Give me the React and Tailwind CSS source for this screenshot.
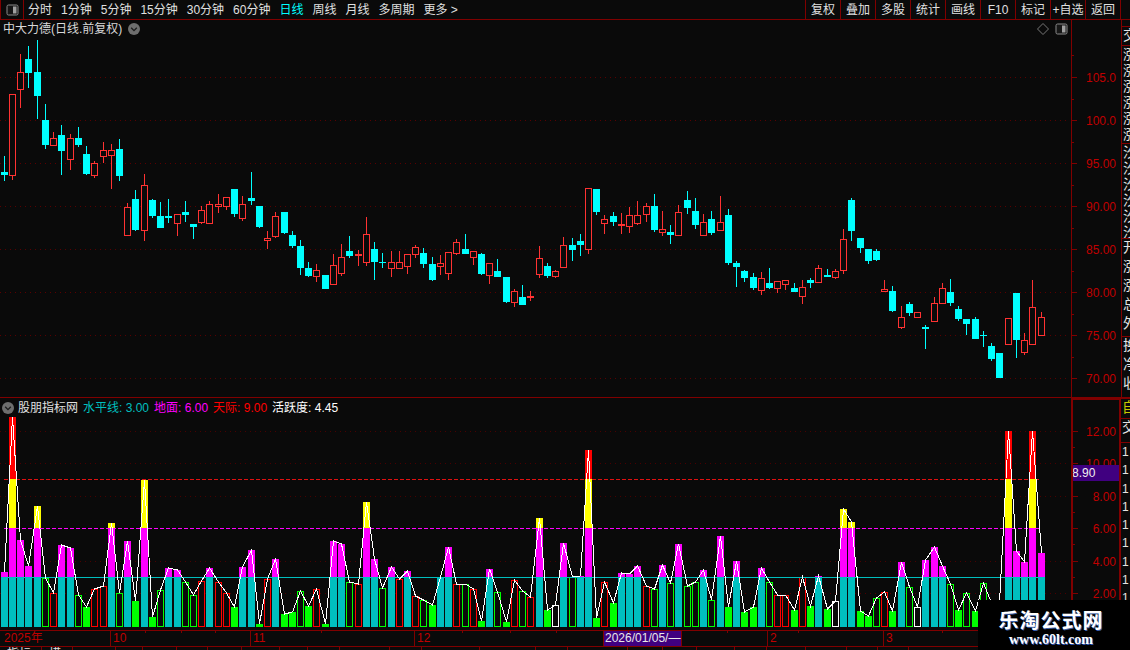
import React from 'react';

// [1 = cyan / 0 = red, body top, body bottom, wick top, wick bottom]
const candles = [
  [1,172,175,156,181],[0,94,176,94,180],[0,72,90,54,108],[1,59,73,46,88],[1,72,96,40,119],[1,120,145,104,149],
  [0,138,146,132,146],[1,135,151,125,175],[0,138,160,134,170],[1,138,145,127,147],[1,154,174,146,175],[0,163,176,161,178],
  [0,150,157,142,163],[0,150,156,144,189],[1,149,176,139,181],[0,207,236,203,236],[1,199,230,190,231],[0,185,231,174,241],
  [1,200,216,199,218],[1,216,228,202,228],[1,216,218,199,223],[0,214,224,214,236],[1,212,215,201,222],[1,224,227,224,239],
  [0,210,223,206,224],[0,204,224,201,224],[0,204,207,194,213],[0,197,207,197,210],[1,189,214,189,217],[0,204,219,196,221],
  [1,198,201,172,205],[1,206,227,206,228],[0,238,241,231,249],[0,216,237,212,238],[1,212,233,212,234],[1,235,246,231,248],
  [1,246,268,240,275],[1,268,276,262,277],[0,270,277,264,282],[1,275,289,275,289],[0,265,285,254,285],[0,257,274,244,276],
  [1,251,256,236,258],[0,254,256,250,266],[0,234,263,217,266],[1,249,262,242,280],[1,262,263,253,268],[0,262,269,251,277],
  [0,262,269,251,269],[0,254,267,254,274],[0,247,255,245,258],[1,253,264,248,268],[1,264,280,257,281],[0,263,267,255,275],
  [0,252,274,252,280],[0,242,254,239,255],[1,249,254,234,254],[0,251,258,251,265],[1,254,274,253,275],[0,263,276,263,284],
  [1,271,277,259,277],[1,277,302,277,303],[0,291,303,289,307],[1,297,305,285,305],[0,296,298,291,301],[0,258,275,246,278],
  [1,266,276,263,278],[0,271,277,270,278],[0,245,268,237,268],[1,245,250,238,261],[1,241,245,234,256],[0,188,250,188,254],
  [1,189,212,189,215],[0,219,224,215,234],[1,216,222,212,226],[0,224,226,213,234],[0,215,227,207,233],[0,215,224,201,225],
  [0,206,215,203,222],[1,206,230,194,232],[0,229,233,211,236],[1,232,235,225,244],[0,212,236,205,236],[1,200,208,191,214],
  [1,211,225,198,229],[0,222,236,214,236],[1,219,233,211,235],[0,222,231,196,231],[1,215,263,209,265],[1,263,267,261,287],
  [1,271,278,270,282],[1,277,288,273,290],[0,278,291,272,295],[1,283,288,268,289],[0,281,289,281,293],[0,280,285,280,290],
  [1,288,292,283,292],[0,287,297,280,304],[1,280,283,278,288],[0,268,283,265,283],[1,275,277,269,277],[0,271,278,269,279],
  [0,239,271,229,274],[1,200,231,198,241],[1,238,248,238,253],[1,249,261,249,264],[1,251,260,249,261],[0,289,292,280,292],
  [1,291,311,286,312],[0,317,328,306,329],[1,304,313,302,316],[0,312,318,312,318],[1,327,329,325,349],[0,303,322,297,322],
  [0,288,304,283,304],[1,292,303,279,306],[1,309,319,306,321],[1,319,324,319,335],[1,319,339,317,339],[1,335,336,331,347],
  [1,346,359,343,361],[1,353,378,353,378],[0,318,345,318,345],[1,293,340,293,358],[0,340,353,333,355],[0,307,345,280,345],
  [0,317,336,312,336],
];

// [kind, top in 3x crop units]: s = stacked, g = green fill, o = green outline, r = red outline, w = white outline
const bars = [
  ['s',546],['s',81],['s',450],['s',528],['s',348],['o',565],['r',610],['s',465],['s',474],['o',616],['g',651],['r',598],
  ['r',589],['s',399],['o',610],['s',453],['g',633],['s',270],['g',681],['o',601],['s',534],['s',540],['o',577],['o',616],
  ['r',574],['s',534],['r',577],['r',610],['g',651],['s',531],['s',480],['g',702],['r',568],['s',507],['g',672],['g',666],
  ['o',604],['g',648],['r',598],['g',702],['s',453],['s',462],['o',577],['r',583],['s',336],['s',507],['o',595],['s',531],
  ['r',568],['s',543],['r',619],['o',631],['g',645],['s',562],['s',471],['r',583],['o',583],['r',598],['g',693],['s',537],
  ['o',607],['g',696],['r',571],['o',604],['r',622],['s',384],['g',660],['w',646],['s',459],['o',562],['s',558],['s',180],
  ['g',684],['r',577],['g',639],['s',549],['s',553],['s',528],['r',589],['o',598],['s',525],['o',580],['s',462],['o',589],
  ['o',577],['s',540],['o',631],['s',438],['g',651],['s',513],['g',666],['g',651],['s',534],['o',577],['r',616],['r',616],
  ['g',660],['r',562],['g',648],['s',558],['g',657],['w',634],['s',357],['s',396],['g',663],['g',678],['o',625],['r',607],
  ['g',663],['s',516],['o',592],['w',652],['s',510],['s',471],['s',528],['o',583],['g',660],['o',610],['g',663],['o',580],
  ['o',640],['o',640],['s',123],['s',483],['s',516],['s',123],['s',489],
];

const barLeft = (i) => Math.round(4.3 + 8.228 * i - 3.51);
const barTop = (v) => Math.round(390 + v / 3);

const mainGrid = [77, 120, 163, 206, 249, 292, 335, 378];
const mainLabels = ['105.0', '100.0', '95.00', '90.00', '85.00', '80.00', '75.00', '70.00'];
const subGrid = [431, 463, 496, 561, 593];
const subLabels = [[431, '12.00'], [463, '10.00'], [496, '8.00'], [528, '6.00'], [561, '4.00'], [593, '2.00']];

const tabs = ['分时', '1分钟', '5分钟', '15分钟', '30分钟', '60分钟', '日线', '周线', '月线', '多周期', '更多 >'];
const tools = ['复权', '叠加', '多股', '统计', '画线', 'F10', '标记', '+自选', '返回'];

const PanelIcon = ({ className }) => (
  <svg width="13" height="12" viewBox="0 0 13 12" className={className}>
    <rect x="1" y="1" width="11" height="10" rx="1.5" fill="#161616" stroke="#8a8a8a" />
    <rect x="7" y="2.5" width="3.5" height="7" fill="#a0a0a0" />
  </svg>
);

const RoundArrow = () => (
  <svg width="12" height="12" viewBox="0 0 12 12">
    <circle cx="6" cy="6" r="6" fill="#6e6e6e" />
    <path d="M3.2 4.8 L6 7.6 L8.8 4.8" fill="none" stroke="#1c1c1c" strokeWidth="1.3" />
  </svg>
);

const CandleChart = () => (
  <svg width="1071" height="359" viewBox="0 38 1071 359" shapeRendering="crispEdges" className="block">
    {mainGrid.map((y) => (
      <line key={y} x1="0" x2="1068" y1={y + 0.5} y2={y + 0.5} stroke="#5a0000" strokeDasharray="1 4" />
    ))}
    {candles.map(([cyan, top, bottom, wickTop, wickBottom], i) => {
      const x = barLeft(i);
      const color = cyan ? '#00ffff' : '#ff3232';
      return (
        <g key={i}>
          <rect x={x + 3} y={wickTop} width="1" height={wickBottom - wickTop} fill={color} />
          {cyan ? (
            <rect x={x} y={top} width="7" height={bottom - top} fill={color} />
          ) : (
            <rect x={x + 0.5} y={top + 0.5} width="6" height={bottom - top - 1} fill="#0a0a0a" stroke={color} />
          )}
        </g>
      );
    })}
  </svg>
);

const stack = [
  [577, 627, '#00bfbf'],
  [528, 577, '#ff00ff'],
  [479, 528, '#ffff00'],
  [0, 479, '#ff0000'],
];

const outlineColor = { o: '#00ff00', r: '#ff0000', w: '#ffffff' };

const ActivityChart = () => {
  const points = bars.map(([, v], i) => `${barLeft(i) + 3.5},${barTop(v)}`).join(' ');
  return (
    <svg width="1071" height="213" viewBox="0 417 1071 213" shapeRendering="crispEdges" className="block">
      {subGrid.map((y) => (
        <line key={y} x1="0" x2="1068" y1={y + 0.5} y2={y + 0.5} stroke="#4a0000" strokeDasharray="1 4" />
      ))}
      <line x1="4" x2="1039" y1="479.5" y2="479.5" stroke="#e01010" strokeDasharray="4 2" />
      {bars.map(([kind, v], i) => {
        const x = barLeft(i);
        const top = barTop(v);
        if (kind === 's') {
          return stack.map(([from, to, fill]) => {
            const y = Math.max(from, top);
            return y < to ? <rect key={`${i}-${from}`} x={x} y={y} width="7" height={to - y} fill={fill} /> : null;
          });
        }
        if (kind === 'g') return <rect key={i} x={x} y={top} width="7" height={627 - top} fill="#00ff00" />;
        return (
          <rect key={i} x={x + 0.5} y={top + 0.5} width="6" height={626 - top} fill="#0a0a0a" stroke={outlineColor[kind]} />
        );
      })}
      <line x1="4" x2="1039" y1="528.5" y2="528.5" stroke="#ff00ff" strokeDasharray="4 2" />
      <line x1="1" x2="1045" y1="577.5" y2="577.5" stroke="#00bfbf" />
      <polyline points={points} fill="none" stroke="#ffffff" />
    </svg>
  );
};

const MainAxis = () => (
  <svg width="49" height="377" viewBox="1072 20 49 377" shapeRendering="crispEdges" className="block">
    {mainGrid.map((y, i) => (
      <g key={y}>
        <rect x="1072" y={y} width="5" height="1" fill="#800000" />
        <rect x="1072" y={y + 22} width="2" height="1" fill="#800000" />
        <text x="1116" y={y + 5} textAnchor="end" fontSize="12" fill="#c00000">{mainLabels[i]}</text>
      </g>
    ))}
    <rect x="1072" y="55" width="2" height="1" fill="#800000" />
  </svg>
);

const SubAxis = () => (
  <svg width="46" height="228" viewBox="1073 400 46 228" shapeRendering="crispEdges" className="block">
    {subLabels.map(([y, label]) => (
      <g key={y}>
        <rect x="1073" y={y} width="5" height="1" fill="#800000" />
        <rect x="1073" y={y + 16} width="2" height="1" fill="#800000" />
        <text x="1116" y={y + 5} textAnchor="end" fontSize="12" fill="#c00000">{label}</text>
      </g>
    ))}
    <rect x="1073" y="465" width="46" height="16" fill="#400080" />
    <text x="1072" y="477" fontSize="12" fill="#f0f0f0">8.90</text>
  </svg>
);

const StripSection = ({ rows, height, color = 'text-[#e4e4e4]', rowHeight = 'h-[16px]' }) => (
  <div className="border-t border-[#800000] overflow-hidden" style={{ height }}>
    {rows.split('').map((ch, i) => (
      <div key={i} className={`${rowHeight} pl-[1px] text-[14px] leading-[16px] ${color}`}>{ch}</div>
    ))}
  </div>
);

const dateTicks = [35, 71, 105, 211, 352, 400, 446, 518, 617, 688, 832, 878];
const footerCells = [42, 31, 43, 27, 34, 31, 34, 38, 28, 32, 50, 32, 58, 56, 32, 60, 35, 34, 38, 32, 39, 41, 31, 31];

export default function App() {
  return (
    <div className="w-[1130px] h-[650px] relative overflow-hidden bg-[#0a0a0a] text-[12px] text-[#e0e0e0] font-['Liberation_Sans','Noto_Sans_CJK_SC',sans-serif]">
      {/* toolbar */}
      <div className="h-[20px] flex items-center border-b border-[#800000]">
        <div className="w-[24px] h-full flex items-center justify-center border-x border-[#800000]">
          <PanelIcon />
        </div>
        <div className="flex items-center gap-[9px] ml-[4px]">
          {tabs.map((t) => (
            <span key={t} className={t === '日线' ? 'text-[#00ffff]' : ''}>{t}</span>
          ))}
        </div>
        <div className="ml-auto mr-[9px] flex h-full">
          {tools.map((t) => (
            <div key={t} className="w-[35px] last:w-[36px] last:border-r h-full flex items-center justify-center border-l border-[#800000] whitespace-nowrap">
              {t}
            </div>
          ))}
        </div>
      </div>

      {/* price panel */}
      <div className="h-[378px] flex border-b border-[#800000]">
        <div className="w-[1071px]">
          <div className="h-[18px] flex items-center pl-[3px] pr-[3px]">
            <span className="text-[#d8d8d8]">中大力德(日线.前复权)</span>
            <span className="ml-[6px]"><RoundArrow /></span>
            <span className="ml-auto text-[#777] flex items-center gap-[6px]">
              <svg width="12" height="12" viewBox="0 0 12 12"><path d="M6 .5 L11.5 6 L6 11.5 L.5 6 Z" fill="none" stroke="#777" /></svg>
              <PanelIcon />
            </span>
          </div>
          <CandleChart />
        </div>
        <div className="w-[50px] border-l border-[#800000]">
          <MainAxis />
        </div>
        <div className="w-[9px] border-l border-[#800000] overflow-hidden">
          <div className="h-[6px]" />
          <StripSection rows="交" height={19} />
          <StripSection rows="涨涨涨涨涨涨" height={98} />
          <StripSection rows="汐汐汐汐汐汐" height={95} />
          <StripSection rows="开涨涨总外" height={98} rowHeight="h-[19px]" />
          <StripSection rows="换净收" height={61} rowHeight="h-[19px]" />
        </div>
      </div>

      {/* activity panel */}
      <div className="h-[232px] flex">
        <div className="w-[1071px]">
          <div className="h-[19px] flex items-center gap-[5px] pl-[2px]">
            <RoundArrow />
            <span className="ml-[-1px]">股朋指标网</span>
            <span className="text-[#00bfbf]">水平线: 3.00</span>
            <span className="text-[#ff00ff]">地面: 6.00</span>
            <span className="text-[#ff0000]">天际: 9.00</span>
            <span className="text-white">活跃度: 4.45</span>
          </div>
          <ActivityChart />
        </div>
        <div className="w-[50px] border-2 border-[#800000]">
          <SubAxis />
        </div>
        <div className="w-[9px] overflow-hidden">
          <StripSection rows="自" height={20} color="text-[#c8c800]" />
          <StripSection rows="交" height={24} />
          <div className="border-t border-[#800000] h-[190px]">
            {'1111111111'.split('').map((ch, i) => (
              <div key={i} className="h-[18.3px] pl-[1px] leading-[18px] text-[#e4e4e4]">{ch}</div>
            ))}
          </div>
        </div>
      </div>

      {/* date axis */}
      <div className="h-[17px] w-[1071px] relative flex border-y border-[#800000] text-[#c00000] text-[12px] leading-[15px]">
        <div className="w-[110px] pl-[4px]">2025年</div>
        <div className="w-[140px] pl-[2px] border-l border-[#800000]">10</div>
        <div className="w-[164px] pl-[2px] border-l border-[#800000]">11</div>
        <div className="w-[189px] pl-[2px] border-l border-[#800000]">12</div>
        <div className="w-[79px] border-x border-[#800000] bg-[#400080] text-[#e8e8e8] whitespace-nowrap pl-[1px]">2026/01/05/—</div>
        <div className="w-[85px]" />
        <div className="w-[116px] pl-[2px] border-l border-[#800000]">2</div>
        <div className="flex-1 pl-[2px] border-l border-[#800000]">3</div>
        {dateTicks.map((x) => (
          <span key={x} className="absolute top-0 w-px h-[2px] bg-[#800000]" style={{ left: x + 110 }} />
        ))}
      </div>

      {/* clipped tab row */}
      <div className="h-[3px] flex overflow-hidden">
        {footerCells.map((w, i) => (
          <div key={i} className="h-full border-r border-[#800000] overflow-hidden shrink-0 pl-[7px] leading-[14px] text-[#e0e0e0]" style={{ width: w }}>
            {i === 0 ? '指标' : i === 1 ? '模板' : ''}
          </div>
        ))}
      </div>

      {/* watermark */}
      <div className="absolute right-0 bottom-0 w-[152px] h-[50px] bg-black flex flex-col items-center pt-[7px]">
        <div className="text-white font-bold text-[20px] leading-[25px] tracking-[1px] mr-[6px] font-['Noto_Sans_CJK_SC',sans-serif] [text-shadow:1px_1px_0_#3a5ea8]">乐淘公式网</div>
        <div className="text-white font-bold text-[14px] leading-[16px] font-['Liberation_Serif',serif] [text-shadow:1px_1px_0_#2a52b0] mr-[6px]">www.60lt.com</div>
      </div>
    </div>
  );
}
